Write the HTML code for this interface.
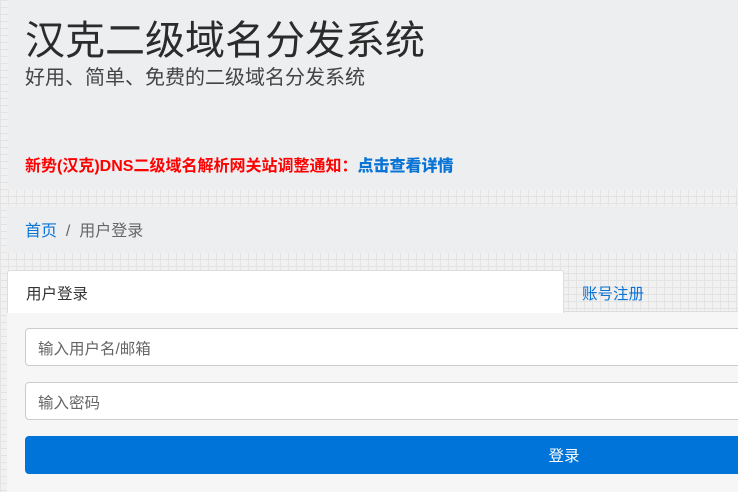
<!DOCTYPE html>
<html><head><meta charset="utf-8"><style>
*{box-sizing:border-box;margin:0;padding:0}
body{width:738px;height:491px;overflow:hidden;font-family:"Liberation Sans","Noto Sans CJK SC",sans-serif;
background-color:#f1f1f1;background-image:linear-gradient(#e3e3e3 1px,transparent 1px),linear-gradient(90deg,#e3e3e3 1px,transparent 1px);background-size:8px 7px;position:relative}
.j{position:absolute;left:8px;top:0;width:740px;height:190px;background:#eceef0}
.t{position:absolute;left:25px;top:8px;font-size:40px;color:#2b2b2b;white-space:nowrap}
.s{position:absolute;left:25px;top:61px;font-size:20px;color:#444;white-space:nowrap}
.n{position:absolute;left:25px;top:152px;font-size:16px;font-weight:bold;color:#f00;white-space:nowrap}
.n b{color:#0a74d6}
.bc{position:absolute;left:7px;top:206px;width:740px;height:47px;background:#eceef0;font-size:16px;color:#666;padding:11px 0 0 18px}
.bc a{color:#0a74d6}
.tab{position:absolute;left:7px;top:270px;width:557px;height:43px;background:#fff;border:1px solid #ddd;border-bottom:none;border-radius:3px 3px 0 0;font-size:15.5px;color:#333;padding:11px 0 0 18px}
.reg{position:absolute;left:582px;top:282px;font-size:15.5px;color:#0a74d6}
.line{position:absolute;left:564px;top:311px;width:180px;height:1px;background:#ddd}
.cb{position:absolute;left:7px;top:312px;width:740px;height:180px;background:#f6f6f6}
.in{position:absolute;left:25px;width:1080px;height:38px;background:#fff;border:1px solid #ccc;border-radius:4px;font-size:15.5px;color:#666;padding:8px 0 0 12px}
.btn{position:absolute;left:25px;top:436px;width:1078px;height:38px;background:#0074d9;border-radius:4px;color:#fff;font-size:15.5px;text-align:center;padding-top:8px}
</style></head><body>
<div class="j"></div>
<div class="t">汉克二级域名分发系统</div>
<div class="s">好用、简单、免费的二级域名分发系统</div>
<div class="n">新势(汉克)DNS二级域名解析网关站调整通知：<b>点击查看详情</b></div>
<div class="bc"><a>首页</a>&nbsp; / &nbsp;用户登录</div>
<div class="cb"></div>
<div class="tab">用户登录</div>
<div class="reg">账号注册</div>
<div class="line"></div>
<div class="in" style="top:328px">输入用户名/邮箱</div>
<div class="in" style="top:382px">输入密码</div>
<div class="btn">登录</div>
</body></html>
